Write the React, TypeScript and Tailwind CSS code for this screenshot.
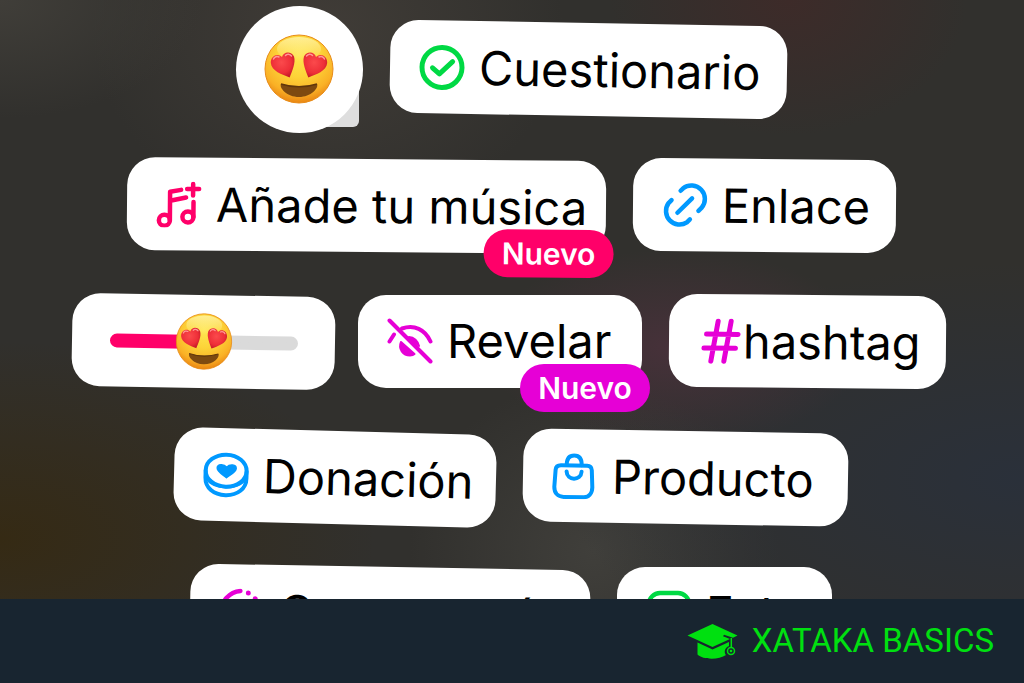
import type { ReactNode } from 'react'

function HeartEyes({ className }: { className: string }) {
  return (
    <svg viewBox="0 0 70 70" className={className} aria-hidden="true">
      <defs>
        <radialGradient id="face" cx="50%" cy="30%" r="70%">
          <stop offset="0" stopColor="#ffe650" />
          <stop offset="0.45" stopColor="#fdd338" />
          <stop offset="0.8" stopColor="#fab126" />
          <stop offset="1" stopColor="#e98512" />
        </radialGradient>
        <linearGradient id="shine" x1="0" y1="0" x2="0" y2="1">
          <stop offset="0" stopColor="#fff9b8" stopOpacity="0.7" />
          <stop offset="1" stopColor="#fff9b8" stopOpacity="0" />
        </linearGradient>
        <radialGradient id="heart" cx="45%" cy="40%" r="60%">
          <stop offset="0" stopColor="#fb4a4c" />
          <stop offset="0.7" stopColor="#ee2f38" />
          <stop offset="1" stopColor="#c91c2a" />
        </radialGradient>
      </defs>
      <circle cx="35" cy="35" r="34" fill="url(#face)" stroke="#e88c18" strokeWidth="1" />
      <ellipse cx="35" cy="15" rx="22" ry="12" fill="url(#shine)" />
      <g fill="url(#heart)">
        <path d="M25.700 43.500 C18 40.500 7.500 37 6.800 29 C6.500 21.500 14 18.500 18 23 C19.500 17 27.500 17 30 22.500 C32 29 28 37 25.700 43.500Z" />
        <path d="M44.300 43.500 C52 40.500 62.500 37 63.200 29 C63.500 21.500 56 18.500 52 23 C50.500 17 42.500 17 40 22.500 C38 29 42 37 44.300 43.500Z" />
      </g>
      <path d="M9.500 25 C10.500 22.500 13 22 15 23M21.500 21.500 C23 19.500 26 20 27.500 22M42.500 22 C44 20 47 19.500 48.500 21.500M55 23 C57 22 59.500 22.500 60.500 25" stroke="#ff9a96" strokeWidth="1.500" fill="none" strokeLinecap="round" />
      <path d="M17 50 C28 53.500 42 53.500 53 50 C55 54 47 63 35 63 C23 63 15 54 17 50Z" fill="#7d4a10" />
      <path d="M17 50 C28 53.500 42 53.500 53 50" stroke="#5f360b" strokeWidth="1.500" fill="none" />
    </svg>
  )
}

function Icon({ color, children }: { color: string; children: ReactNode }) {
  return (
    <svg
      viewBox="0 0 46 46"
      className={`size-[46px] shrink-0 ${color}`}
      fill="none"
      stroke="currentColor"
      strokeWidth="4.500"
      strokeLinecap="round"
      strokeLinejoin="round"
      aria-hidden="true"
    >
      {children}
    </svg>
  )
}

const CheckIcon = () => (
  <Icon color="text-[#00d944]">
    <circle cx="23" cy="23" r="20" strokeWidth="5" />
    <path d="M13.500 23.500 L20.500 29.500 L33.500 17" strokeWidth="5" />
  </Icon>
)

const MusicIcon = () => (
  <Icon color="text-[#ff0069]">
    <circle cx="8.500" cy="39" r="5.500" />
    <circle cx="32" cy="35.500" r="5.500" />
    <path d="M14 39 V10.500 L25 8.500M14 19.500 L30 16M37.500 35.500 V20.500M37 2.500 V14M31 7.500 H43" />
  </Icon>
)

const LinkIcon = () => (
  <Icon color="text-[#0099ff]">
    <path d="M18.500 8.500 L21 6 A13.500 13.500 0 0 1 39.500 25.500 L36.500 28.500" />
    <path d="M9.500 18 L6.500 21 A13.500 13.500 0 0 0 25 40 L28 37" />
    <path d="M15.500 30.500 L30 16" />
  </Icon>
)

const HiddenIcon = () => (
  <Icon color="text-[#e600d6]">
    <path d="M2.500 2.500 L43.500 43.500" strokeWidth="4" />
    <path d="M15 10.500 C27 6.500 38 11 43.500 23.500M7 16.500 L2.500 23.500" strokeWidth="4" />
    <path d="M14 24 C11 31 16 37.500 23 37.500 C25.500 37.500 27 36.500 27.500 36Z" fill="currentColor" strokeWidth="2" />
    <path d="M22 19 C27 19 31 23 32 28Z" fill="currentColor" strokeWidth="2" />
  </Icon>
)

const CoinIcon = () => (
  <Icon color="text-[#0099ff]">
    <ellipse cx="23" cy="18.500" rx="20.500" ry="16" strokeWidth="4" />
    <path d="M2.500 19 V26 C2.500 36 11 43 23 43 C35 43 43.500 36 43.500 26 V19" strokeWidth="4" />
    <path d="M4 27 C9 38 37 38 42 27" strokeWidth="2" />
    <path d="M23.500 25.500 C19 22 14 19.500 14 16 C14 12 20.500 11.500 23.500 15 C26.500 11.500 33 12 33 16 C33 19.500 28 22 23.500 25.500Z" fill="currentColor" strokeWidth="1.500" />
  </Icon>
)

const BagIcon = () => (
  <Icon color="text-[#0099ff]">
    <path d="M9 12.500 H35 C38 12.500 39.500 14 39.700 17 L40.500 34 C40.500 40 37 44 32 44 H12 C6 44 2.500 40 2.500 34 L3.500 17 C3.700 14 5.500 12.500 9 12.500Z" strokeWidth="4" />
    <path d="M14.500 12 C14.500 6 17 2.500 22 2.500 C27 2.500 29.500 6 29.500 12M14.500 18.500 C15 28 29 28 29.500 18.500" strokeWidth="4" />
  </Icon>
)

const CountdownIcon = () => (
  <Icon color="text-[#e600d6]">
    <path d="M21 2.500 A20.500 20.500 0 1 0 43.500 23" />
    <path d="M29 4.500 V4.600M36 10 V10.100M41 16 V16.100" strokeWidth="5" />
  </Icon>
)

const PhotoIcon = () => (
  <Icon color="text-[#00d944]">
    <rect x="3" y="3" width="40" height="40" rx="11" />
    <circle cx="23" cy="23" r="8" />
  </Icon>
)

const HashIcon = () => (
  <svg viewBox="-3 0 43 46" className="h-[46px] w-[43px] shrink-0 text-[#e600d6]" fill="none" stroke="currentColor" strokeWidth="5" strokeLinecap="round" aria-hidden="true">
    <path d="M17 3 L10 43M30 3 L23 43M5.500 16 H37M3 30 H34.500" />
  </svg>
)

interface StickerProps {
  label: string
  icon: ReactNode
  className: string
  badge?: string
}

function Sticker({ label, icon, className, badge }: StickerProps) {
  return (
    <button
      type="button"
      className={`relative flex h-[93px] shrink-0 items-center rounded-[28px] bg-white pl-[29px] text-[47px] leading-[60px] whitespace-nowrap text-black ${className}`}
    >
      {icon}
      {label}
      {badge && (
        <span className={`absolute -right-2 -bottom-6 flex h-12 w-[130px] items-center justify-center rounded-full text-[30px] leading-8 font-semibold text-white ${badge}`}>
          Nuevo
        </span>
      )}
    </button>
  )
}

function Row({ children, className = '' }: { children: ReactNode; className?: string }) {
  return <div className={`flex h-[136px] shrink-0 items-center justify-center gap-[27px] ${className}`}>{children}</div>
}

function BrandCap() {
  return (
    <svg viewBox="0 0 51 36" className="h-9 w-[51px]" fill="#00e010" aria-hidden="true">
      <path d="M25.500 1 L50.500 12.500 L46 14.700 L37 11.700 L36 13.200 L43 16 L25.500 24 L0.500 12.500Z" />
      <path d="M10.500 19.500 L25.500 26.500 L42 19 V23 C37 25 37 30 39 32 C32 37 16 37 10.500 31.500Z" />
      <path d="M44.300 15 V25" stroke="#00e010" strokeWidth="1.500" />
      <circle cx="44" cy="28" r="3.500" fill="none" stroke="#00e010" strokeWidth="1.500" />
      <circle cx="44" cy="28" r="1.300" />
    </svg>
  )
}

export default function App() {
  return (
    <div className="flex h-screen flex-col overflow-hidden bg-[#182530] font-['Inter','Liberation_Sans',sans-serif]">
      <main className="min-h-0 flex-1 overflow-hidden bg-[#31302d] bg-[radial-gradient(ellipse_at_77%_0%,#3d2b29_0%,transparent_16%),radial-gradient(ellipse_at_66%_58%,#47313a_0%,transparent_20%),radial-gradient(ellipse_at_100%_80%,#2a303a_0%,transparent_32%),radial-gradient(ellipse_at_0%_90%,#352a14_0%,transparent_26%),radial-gradient(ellipse_at_0%_0%,#403e39_0%,transparent_14%),radial-gradient(ellipse_at_32%_5%,#403c37_0%,transparent_24%),radial-gradient(ellipse_at_58%_92%,#403f3b_0%,transparent_22%)] pt-px pr-0.5">
        <Row>
          <button type="button" aria-label="Reacción" className="relative size-[127px] shrink-0">
            <span className="absolute right-1 bottom-1.5 size-12 rounded-md bg-[#dedede]" />
            <span className="relative flex size-full items-center justify-center rounded-full bg-white">
              <HeartEyes className="size-[70px]" />
            </span>
          </button>
          <Sticker label="Cuestionario" icon={<CheckIcon />} className="w-[397px] rotate-1 gap-3.5" />
        </Row>

        <Row>
          <Sticker label="Añade tu música" icon={<MusicIcon />} className="w-[479px] rotate-[0.5deg] gap-3.5" badge="bg-[#ff0069]" />
          <Sticker label="Enlace" icon={<LinkIcon />} className="w-[263px] rotate-[0.5deg] gap-3.5" />
        </Row>

        <Row className="pr-1">
          <div className="mr-[-4px] flex h-[93px] w-[263px] shrink-0 rotate-1 items-center justify-center rounded-[28px] bg-white">
            <div className="relative flex w-[188px] items-center">
              <input
                type="range"
                aria-label="Deslizador de emoji"
                defaultValue={50}
                className="h-3.5 w-full appearance-none rounded-full bg-linear-to-r from-[#ff0069] from-50% to-[#dadada] to-50% [&::-webkit-slider-thumb]:size-14 [&::-webkit-slider-thumb]:appearance-none"
              />
              <HeartEyes className="pointer-events-none absolute left-1/2 size-[57px] -translate-x-1/2" />
            </div>
          </div>
          <Sticker label="Revelar" icon={<HiddenIcon />} className="w-[284px] gap-3.5" badge="bg-[#e600d6]" />
          <Sticker label="hashtag" icon={<HashIcon />} className="w-[277px] rotate-[0.5deg] gap-0.5" />
        </Row>

        <Row>
          <Sticker label="Donación" icon={<CoinIcon />} className="w-[322px] rotate-[1.5deg] gap-3.5" />
          <Sticker label="Producto" icon={<BagIcon />} className="w-[325px] rotate-1 gap-3.5" />
        </Row>

        <Row>
          <Sticker label="Cuenta atrás" icon={<CountdownIcon />} className="w-[400px] rotate-1 gap-3.5" />
          <Sticker label="Foto" icon={<PhotoIcon />} className="w-[215px] gap-3.5" />
        </Row>
      </main>

      <footer className="flex h-[84px] shrink-0 items-center justify-end gap-3.5 pr-[30px] text-[#00e010]">
        <BrandCap />
        <span className="font-['Roboto',sans-serif] text-[33px] leading-10">XATAKA BASICS</span>
      </footer>
    </div>
  )
}
